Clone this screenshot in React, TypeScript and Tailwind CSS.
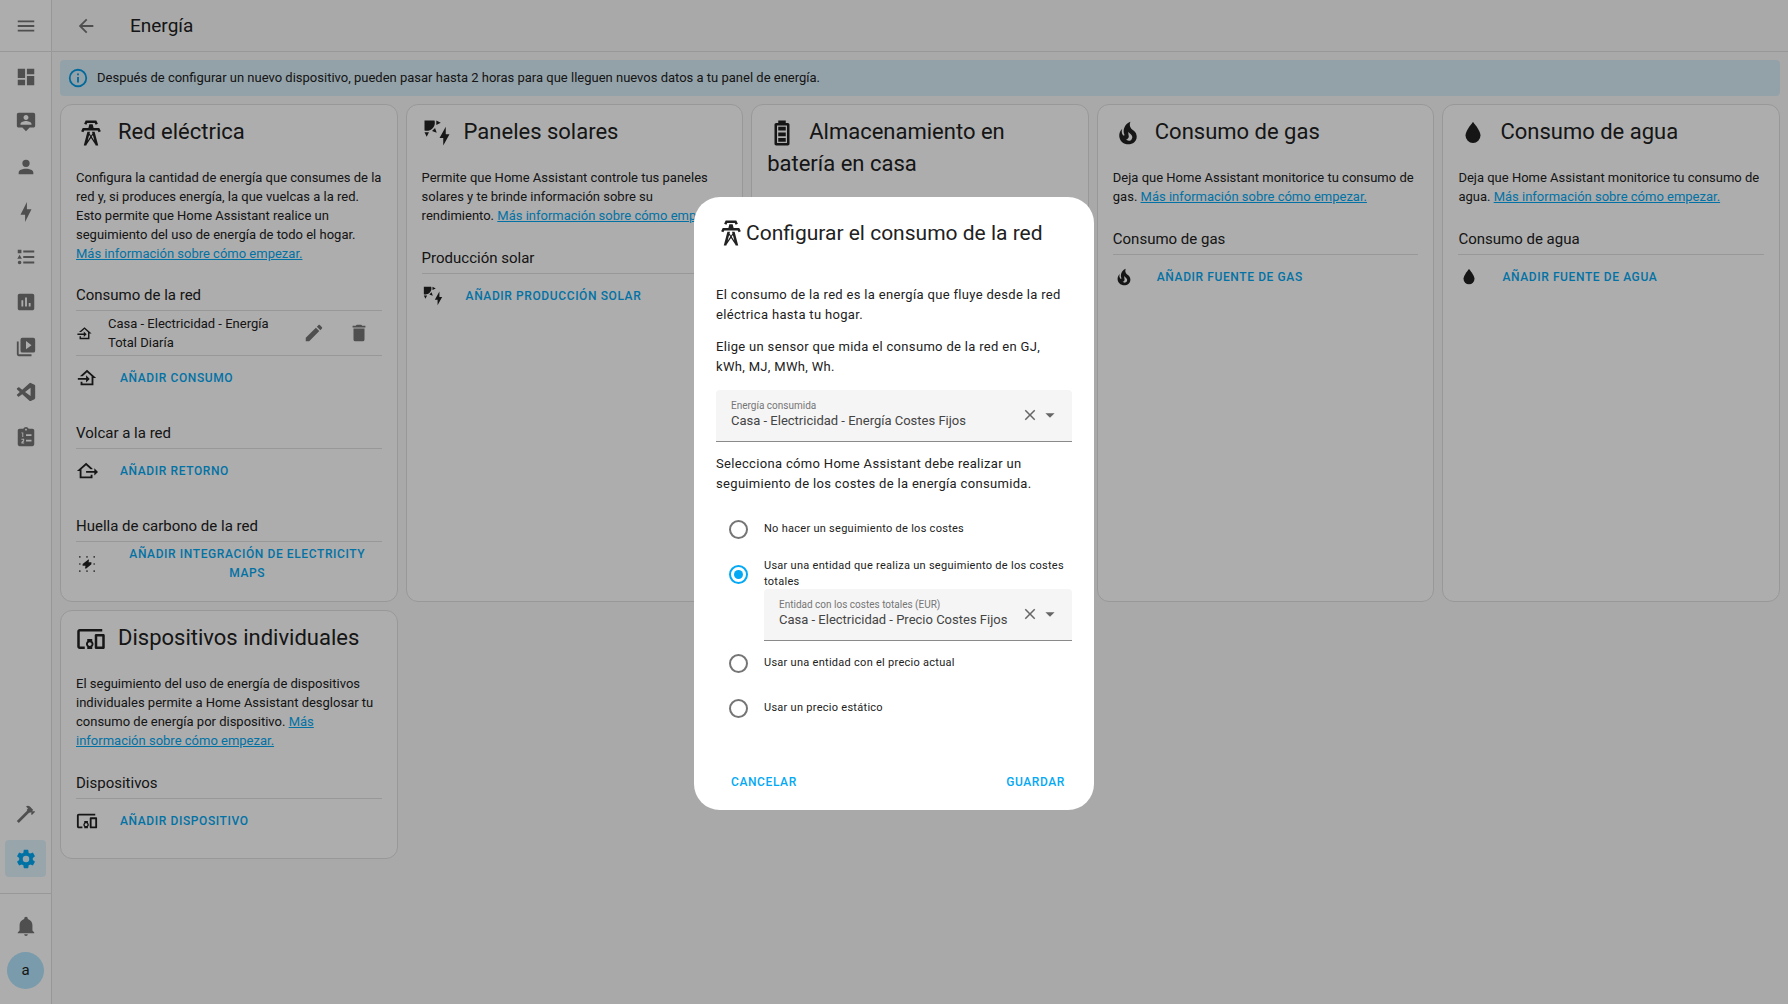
import { useState } from 'react';
import type { ReactNode } from 'react';

const icons = {
  menu: 'M3,6H21V8H3V6M3,11H21V13H3V11M3,16H21V18H3V16Z',
  arrowLeft: 'M20,11V13H8L13.5,18.5L12.08,19.92L4.16,12L12.08,4.08L13.5,5.5L8,11H20Z',
  dashboard: 'M13,3V9H21V3M13,21H21V11H13M3,21H11V15H3M3,13H11V3H3V13Z',
  tooltipAccount:
    'M20 2H4C2.9 2 2 2.9 2 4V16C2 17.11 2.9 18 4 18H8L12 22L16 18H20C21.11 18 22 17.11 22 16V4C22 2.9 21.11 2 20 2M12 4.3C13.5 4.3 14.7 5.5 14.7 7S13.5 9.7 12 9.7C10.5 9.7 9.3 8.5 9.3 7S10.5 4.3 12 4.3M18 15H6V14.1C6 12.1 10 11 12 11S18 12.1 18 14.1V15Z',
  account:
    'M12,4A4,4 0 0,1 16,8A4,4 0 0,1 12,12A4,4 0 0,1 8,8A4,4 0 0,1 12,4M12,14C16.42,14 20,15.79 20,18V20H4V18C4,15.79 7.58,14 12,14Z',
  bolt: 'M11 15H6L13 1V9H18L11 23V15Z',
  list: 'M5,9.5L7.5,14H2.5L5,9.5M3,4H7V8H3V4M5,20A2,2 0 0,0 7,18A2,2 0 0,0 5,16A2,2 0 0,0 3,18A2,2 0 0,0 5,20M9,5V7H21V5H9M9,19H21V17H9V19M9,13H21V11H9V13Z',
  chart:
    'M19 3H5C3.9 3 3 3.9 3 5V19C3 20.1 3.9 21 5 21H19C20.1 21 21 20.1 21 19V5C21 3.9 20.1 3 19 3M9 17H7V10H9V17M13 17H11V7H13V17M17 17H15V13H17V17Z',
  media:
    'M4,6H2V20A2,2 0 0,0 4,22H18V20H4V6M20,2H8A2,2 0 0,0 6,4V16A2,2 0 0,0 8,18H20A2,2 0 0,0 22,16V4A2,2 0 0,0 20,2M12,14.5V5.5L18,10L12,14.5Z',
  vscode:
    'M21.29 4.1L17.17 2.12A1.25 1.25 0 0 0 15.75 2.36L7.87 9.55L4.44 6.94A.83 .83 0 0 0 3.37 6.99L2.27 7.99A.83 .83 0 0 0 2.27 9.22L5.25 11.93L2.27 14.65A.83 .83 0 0 0 2.27 15.88L3.37 16.88A.83 .83 0 0 0 4.44 16.93L7.87 14.33L15.75 21.52A1.25 1.25 0 0 0 17.17 21.76L21.29 19.78A1.25 1.25 0 0 0 22 18.65V5.22A1.25 1.25 0 0 0 21.29 4.1M17 16.47L11 11.94L17 7.4Z',
  clipboard:
    'M19 3H14.82C14.4 1.84 13.3 1 12 1S9.6 1.84 9.18 3H5C3.9 3 3 3.9 3 5V20C3 21.1 3.9 22 5 22H19C20.1 22 21 21.1 21 20V5C21 3.9 20.1 3 19 3M12 3C12.55 3 13 3.45 13 4S12.55 5 12 5 11 4.55 11 4 11.45 3 12 3M7 7H9V12H8V8H7V7M7 14H10V16.5L8.2 18H10V19H7V17.5L9 15.5V15H7V14M12 9H18V11H12V9M12 15H18V17H12V15Z',
  hammer:
    'M2,19.63L13.43,8.2L12.72,7.5L14.14,6.07L12,3.89C13.2,2.7 15.09,2.7 16.27,3.89L19.87,7.5L18.45,8.91H21.29L22,9.62L18.45,13.21L17.74,12.5V9.62L16.27,11.04L15.56,10.33L4.13,21.76L2,19.63Z',
  cog: 'M12,15.5A3.5,3.5 0 0,1 8.5,12A3.5,3.5 0 0,1 12,8.5A3.5,3.5 0 0,1 15.5,12A3.5,3.5 0 0,1 12,15.5M19.43,12.97C19.47,12.65 19.5,12.33 19.5,12C19.5,11.67 19.47,11.34 19.43,11L21.54,9.37C21.73,9.22 21.78,8.95 21.66,8.73L19.66,5.27C19.54,5.05 19.27,4.96 19.05,5.05L16.56,6.05C16.04,5.66 15.5,5.32 14.87,5.07L14.5,2.42C14.46,2.18 14.25,2 14,2H10C9.75,2 9.54,2.18 9.5,2.42L9.13,5.07C8.5,5.32 7.96,5.66 7.44,6.05L4.95,5.05C4.73,4.96 4.46,5.05 4.34,5.27L2.34,8.73C2.21,8.95 2.27,9.22 2.46,9.37L4.57,11C4.53,11.34 4.5,11.67 4.5,12C4.5,12.33 4.53,12.65 4.57,12.97L2.46,14.63C2.27,14.78 2.21,15.05 2.34,15.27L4.34,18.73C4.46,18.95 4.73,19.03 4.95,18.95L7.44,17.94C7.96,18.34 8.5,18.68 9.13,18.93L9.5,21.58C9.54,21.82 9.75,22 10,22H14C14.25,22 14.46,21.82 14.5,21.58L14.87,18.93C15.5,18.67 16.04,18.34 16.56,17.94L19.05,18.95C19.27,19.03 19.54,18.95 19.66,18.73L21.66,15.27C21.78,15.05 21.73,14.78 21.54,14.63L19.43,12.97Z',
  bell: 'M21,19V20H3V19L5,17V11C5,7.9 7.03,5.17 10,4.29C10,4.19 10,4.1 10,4A2,2 0 0,1 12,2A2,2 0 0,1 14,4C14,4.1 14,4.19 14,4.29C16.97,5.17 19,7.9 19,11V17L21,19M14,21A2,2 0 0,1 12,23A2,2 0 0,1 10,21',
  info: 'M11,9H13V7H11M12,20C7.59,20 4,16.41 4,12C4,7.59 7.59,4 12,4C16.41,4 20,7.59 20,12C20,16.41 16.41,20 12,20M12,2A10,10 0 0,0 2,12A10,10 0 0,0 12,22A10,10 0 0,0 22,12A10,10 0 0,0 12,2M11,17H13V11H11V17Z',
  tower:
    'M8.28,5.45L6.5,4.55L7.76,2H16.23L17.5,4.55L15.72,5.44L15,4H9L8.28,5.45M18.62,8H14.09L13.3,5H10.7L9.91,8H5.38L4.1,10.55L5.89,11.44L6.62,10H17.38L18.1,11.45L19.89,10.56L18.62,8M17.77,22H15.7L15.46,21.1L12,15.9L8.53,21.1L8.3,22H6.23L9.12,11H11.19L10.83,12.35L12,14.1L13.16,12.35L12.81,11H14.88L17.77,22M11.4,15L10.5,13.65L9.32,18.13L11.4,15M14.68,18.12L13.5,13.64L12.6,15L14.68,18.12Z',
  solar:
    'M11.45,2V5.55L15,3.77L11.45,2M10.45,8L8,10.46L11.75,11.71L10.45,8M2,11.45L3.77,15L5.55,11.45H2M10,2H2V10C2.57,10.17 3.17,10.25 3.77,10.25C7.35,10.26 10.26,7.35 10.27,3.75C10.26,3.16 10.17,2.57 10,2M17,22V16H14L19,7V13H22L17,22Z',
  battery:
    'M16 20H8V6H16M16.67 4H15V2H9V4H7.33C6.6 4 6 4.6 6 5.33V20.67C6 21.4 6.6 22 7.33 22H16.67C17.41 22 18 21.41 18 20.67V5.33C18 4.6 17.4 4 16.67 4M15 16H9V19H15V16M15 7H9V10H15V7M15 11.5H9V14.5H15V11.5Z',
  fire: 'M17.66 11.2C17.43 10.9 17.15 10.64 16.89 10.38C16.22 9.78 15.46 9.35 14.82 8.72C13.33 7.26 13 4.85 13.95 3C13 3.23 12.17 3.75 11.46 4.32C8.87 6.4 7.85 10.07 9.07 13.22C9.11 13.32 9.15 13.42 9.15 13.55C9.15 13.77 9 13.97 8.8 14.05C8.57 14.15 8.33 14.09 8.14 13.93C8.08 13.88 8.04 13.83 8 13.76C6.87 12.33 6.69 10.28 7.45 8.64C5.78 10 4.87 12.3 5 14.47C5.06 14.97 5.12 15.47 5.29 15.97C5.43 16.57 5.7 17.17 6 17.7C7.08 19.43 8.95 20.67 10.96 20.92C13.1 21.19 15.39 20.8 17.03 19.32C18.86 17.66 19.5 15 18.56 12.72L18.43 12.46C18.22 12 17.66 11.2 17.66 11.2M14.5 17.5C14.22 17.74 13.76 18 13.4 18.1C12.28 18.5 11.16 17.94 10.5 17.28C11.69 17 12.4 16.12 12.61 15.23C12.78 14.43 12.46 13.77 12.33 13C12.21 12.26 12.23 11.63 12.5 10.94C12.69 11.32 12.89 11.7 13.13 12C13.9 13 15.11 13.44 15.37 14.8C15.41 14.94 15.43 15.08 15.43 15.23C15.46 16.05 15.1 16.95 14.5 17.5H14.5Z',
  water: 'M12,20A6,6 0 0,1 6,14C6,10 12,3.25 12,3.25C12,3.25 18,10 18,14A6,6 0 0,1 12,20Z',
  devices:
    'M3 6H21V4H3C1.9 4 1 4.9 1 6V18C1 19.1 1.9 20 3 20H7V18H3V6M13 12H9V13.78C8.39 14.33 8 15.11 8 16C8 16.89 8.39 17.67 9 18.22V20H13V18.22C13.61 17.67 14 16.88 14 16S13.61 14.33 13 13.78V12M11 17.5C10.17 17.5 9.5 16.83 9.5 16S10.17 14.5 11 14.5 12.5 15.17 12.5 16 11.83 17.5 11 17.5M22 8H16C15.5 8 15 8.5 15 9V19C15 19.5 15.5 20 16 20H22C22.5 20 23 19.5 23 19V9C23 8.5 22.5 8 22 8M21 18H17V10H21V18Z',
  homeImport: 'M15 13L11 17V14H2V12H11V9L15 13M5 20V16H7V18H17V10.19L12 5.69L7.21 10H4.22L12 3L22 12H19V20H5Z',
  homeExport: 'M24 13L20 17V14H11V12H20V9L24 13M4 20V12H1L11 3L18 9.3V10H15.79L11 5.69L6 10.19V18H16V16H18V20H4Z',
  carbon:
    'M13.5 7.2L7.2 12V13.8H10.4L9.8 16.8L11.2 17L16.8 12.2V10.2H13.7L14.2 7.4L13.5 7.2M3.6 3.4H4.8V5.2H3.6V3.4M11.4 3.4H12.6V5.2H11.4V3.4M19.2 3.4H20.4V5.2H19.2V3.4M3.6 11.1H4.8V12.9H3.6V11.1M19.2 11.1H20.4V12.9H19.2V11.1M3.6 18.8H4.8V20.6H3.6V18.8M11.4 18.8H12.6V20.6H11.4V18.8M19.2 18.8H20.4V20.6H19.2V18.8Z',
  pencil:
    'M20.71,7.04C21.1,6.65 21.1,6 20.71,5.63L18.37,3.29C18,2.9 17.35,2.9 16.96,3.29L15.12,5.12L18.87,8.87M3,17.25V21H6.75L17.81,9.93L14.06,6.18L3,17.25Z',
  trash: 'M19,4H15.5L14.5,3H9.5L8.5,4H5V6H19M6,19A2,2 0 0,0 8,21H16A2,2 0 0,0 18,19V7H6V19Z',
  close: 'M19,6.41L17.59,5L12,10.59L6.41,5L5,6.41L10.59,12L5,17.59L6.41,19L12,13.41L17.59,19L19,17.59L13.41,12L19,6.41Z',
  menuDown: 'M7,10L12,15L17,10H7Z',
};

type IconName = keyof typeof icons;

function Icon({ name, className = 'size-[22px]' }: { name: IconName; className?: string }) {
  return (
    <svg viewBox="0 0 24 24" fill="currentColor" fillRule="evenodd" aria-hidden="true" className={`shrink-0 ${className}`}>
      <path d={icons[name]} />
    </svg>
  );
}

const sidebarTop: { icon: IconName; label: string }[] = [
  { icon: 'dashboard', label: 'Resumen' },
  { icon: 'tooltipAccount', label: 'Mapa' },
  { icon: 'account', label: 'Personas' },
  { icon: 'bolt', label: 'Energía' },
  { icon: 'list', label: 'Registro' },
  { icon: 'chart', label: 'Historial' },
  { icon: 'media', label: 'Medios' },
  { icon: 'vscode', label: 'Studio Code Server' },
  { icon: 'clipboard', label: 'Lista de tareas' },
];

function SidebarItem({ icon, label, active }: { icon: IconName; label: string; active?: boolean }) {
  return (
    <a
      href="#"
      aria-label={label}
      className={`flex h-[37px] w-[41px] items-center justify-center rounded ${
        active ? 'bg-[#e1f5fe] text-[#03a9f4]' : 'text-[#757575]'
      }`}
    >
      <Icon name={icon} />
    </a>
  );
}

function Sidebar() {
  return (
    <nav className="flex w-[52px] shrink-0 flex-col border-r border-[#e0e0e0] bg-white">
      <div className="flex h-[52px] shrink-0 items-center justify-center border-b border-[#e0e0e0]">
        <button aria-label="Menú" className="text-[#757575]">
          <Icon name="menu" />
        </button>
      </div>
      <div className="flex flex-1 flex-col items-center gap-2 pt-[6px]">
        {sidebarTop.map((item) => (
          <SidebarItem key={item.icon} {...item} />
        ))}
      </div>
      <div className="flex flex-col items-center gap-2 pb-4">
        <SidebarItem icon="hammer" label="Herramientas" />
        <SidebarItem icon="cog" label="Ajustes" active />
      </div>
      <div className="flex flex-col items-center gap-2 border-t border-[#e0e0e0] pt-[13px] pb-[15px]">
        <SidebarItem icon="bell" label="Notificaciones" />
        <button className="flex size-[37px] items-center justify-center rounded-full bg-[#b3e5fc] text-[15px] text-[#212121]">
          a
        </button>
      </div>
    </nav>
  );
}

function Card({ icon, title, children }: { icon: IconName; title: string; children?: ReactNode }) {
  return (
    <section className="rounded-xl border border-[#e0e0e0] bg-white px-[15px] pb-[15px] text-[13px] leading-[19px]">
      <h1 className="pt-[11px] text-[22px] leading-8">
        <Icon name={icon} className="mr-3 inline-block size-[30px] align-middle" />
        {title}
      </h1>
      {children}
    </section>
  );
}

function MoreLink() {
  return (
    <a href="#" className="text-[#03a9f4] underline">
      Más información sobre cómo empezar.
    </a>
  );
}

function Section({ title, children }: { title: string; children: ReactNode }) {
  return (
    <div>
      <h3 className="border-b border-[#e0e0e0] pb-[5px] text-[15px] leading-[19px]">{title}</h3>
      {children}
    </div>
  );
}

function AddRow({ icon, children }: { icon: IconName; children: ReactNode }) {
  return (
    <div className="flex h-11 items-center">
      <Icon name={icon} />
      <button className="ml-[15px] px-[7px] text-xs leading-[19px] font-medium tracking-wider text-[#03a9f4] uppercase">
        {children}
      </button>
    </div>
  );
}

function ComboBox({ id, label, value }: { id: string; label: string; value: string }) {
  return (
    <div className="flex h-[52px] items-center rounded-t border-b border-[#8a8a8a] bg-[#f5f5f5] pr-[11px] pl-[15px] tracking-normal">
      <div className="flex min-w-0 flex-1 flex-col">
        <label htmlFor={id} className="text-[10px] leading-3 text-[#757575]">
          {label}
        </label>
        <input
          id={id}
          defaultValue={value}
          className="w-full bg-transparent text-[13px] leading-[18px] text-[#444] outline-none"
        />
      </div>
      <button aria-label="Borrar" className="text-[#666]">
        <Icon name="close" className="size-[18px]" />
      </button>
      <button aria-label="Abrir" className="text-[#666]">
        <Icon name="menuDown" />
      </button>
    </div>
  );
}

function RadioOption({
  value,
  selected,
  onSelect,
  children,
}: {
  value: string;
  selected: string;
  onSelect: (value: string) => void;
  children: ReactNode;
}) {
  return (
    <label className="flex h-[45px] items-center gap-4 pl-[13px] text-[11px] leading-4 tracking-wide">
      <input
        type="radio"
        name="costs"
        checked={selected === value}
        onChange={() => onSelect(value)}
        className="size-[19px] shrink-0 appearance-none rounded-full border-2 border-[#757575] bg-clip-content p-[3px] checked:border-[#03a9f4] checked:bg-[#03a9f4]"
      />
      <span>{children}</span>
    </label>
  );
}

function GridDialog() {
  const [costs, setCosts] = useState('entity');

  return (
    <div className="fixed inset-0 flex items-center justify-center bg-black/32">
      <div
        role="dialog"
        aria-labelledby="dialog-title"
        className="mt-[2px] w-[400px] rounded-[26px] bg-white px-[22px] pb-[9px] text-[13px] leading-5 tracking-wide"
      >
        <h2 id="dialog-title" className="flex items-center pt-[21px] text-[21px] leading-[30px] tracking-normal">
          <Icon name="tower" className="size-[30px]" />
          Configurar el consumo de la red
        </h2>
        <p className="mt-[37px]">El consumo de la red es la energía que fluye desde la red eléctrica hasta tu hogar.</p>
        <p className="mt-3 mb-[13px]">Elige un sensor que mida el consumo de la red en GJ, kWh, MJ, MWh, Wh.</p>
        <ComboBox id="stat-energy" label="Energía consumida" value="Casa - Electricidad - Energía Costes Fijos" />
        <p className="mt-3 mb-[13px]">
          Selecciona cómo Home Assistant debe realizar un seguimiento de los costes de la energía consumida.
        </p>
        <RadioOption value="none" selected={costs} onSelect={setCosts}>
          No hacer un seguimiento de los costes
        </RadioOption>
        <RadioOption value="entity" selected={costs} onSelect={setCosts}>
          Usar una entidad que realiza un seguimiento de los costes totales
        </RadioOption>
        <div className="-mt-2 ml-12">
          <ComboBox id="stat-cost" label="Entidad con los costes totales (EUR)" value="Casa - Electricidad - Precio Costes Fijos" />
        </div>
        <RadioOption value="price" selected={costs} onSelect={setCosts}>
          Usar una entidad con el precio actual
        </RadioOption>
        <RadioOption value="static" selected={costs} onSelect={setCosts}>
          Usar un precio estático
        </RadioOption>
        <div className="mt-[33px] flex h-[37px] items-center justify-between pr-[7px] pl-[15px] text-xs font-medium text-[#03a9f4]">
          <button className="tracking-wider uppercase">Cancelar</button>
          <button className="tracking-wider uppercase">Guardar</button>
        </div>
      </div>
    </div>
  );
}

export default function App() {
  return (
    <div className="flex min-h-screen bg-[#fafafa] font-[Roboto,sans-serif] text-[#212121]">
      <Sidebar />
      <div className="flex min-w-0 flex-1 flex-col">
        <header className="flex h-[52px] items-center border-b border-[#e0e0e0] pl-[23px]">
          <button aria-label="Atrás" className="text-[#757575]">
            <Icon name="arrowLeft" />
          </button>
          <h1 className="ml-[33px] pt-px text-[19px]">Energía</h1>
        </header>
        <main className="flex flex-col gap-2 p-2">
          <div role="alert" className="flex h-9 items-center gap-2 rounded bg-[#d9eff9] px-[7px] text-[13px]">
            <Icon name="info" className="size-[22px] text-[#039be5]" />
            Después de configurar un nuevo dispositivo, pueden pasar hasta 2 horas para que lleguen nuevos datos a tu
            panel de energía.
          </div>
          <div className="grid grid-cols-5 gap-2">
            <Card icon="tower" title="Red eléctrica">
              <p className="mt-5 mb-[23px]">
                Configura la cantidad de energía que consumes de la red y, si produces energía, la que vuelcas a la
                red. Esto permite que Home Assistant realice un seguimiento del uso de energía de todo el hogar.{' '}
                <MoreLink />
              </p>
              <div className="flex flex-col gap-6">
                <Section title="Consumo de la red">
                  <div className="flex h-[45px] items-center border-b border-[#e0e0e0]">
                    <Icon name="homeImport" className="size-[17px]" />
                    <span className="ml-[15px] flex-1">Casa - Electricidad - Energía Total Diaría</span>
                    <button aria-label="Editar" className="flex size-[45px] items-center justify-center text-[#757575]">
                      <Icon name="pencil" />
                    </button>
                    <button aria-label="Eliminar" className="flex size-[45px] items-center justify-center text-[#757575]">
                      <Icon name="trash" />
                    </button>
                  </div>
                  <AddRow icon="homeImport">Añadir consumo</AddRow>
                </Section>
                <Section title="Volcar a la red">
                  <AddRow icon="homeExport">Añadir retorno</AddRow>
                </Section>
                <Section title="Huella de carbono de la red">
                  <AddRow icon="carbon">Añadir integración de Electricity Maps</AddRow>
                </Section>
              </div>
            </Card>
            <Card icon="solar" title="Paneles solares">
              <p className="mt-5 mb-6">
                Permite que Home Assistant controle tus paneles solares y te brinde información sobre su rendimiento.{' '}
                <MoreLink />
              </p>
              <Section title="Producción solar">
                <AddRow icon="solar">Añadir producción solar</AddRow>
              </Section>
            </Card>
            <Card icon="battery" title="Almacenamiento en batería en casa" />
            <Card icon="fire" title="Consumo de gas">
              <p className="mt-5 mb-6">
                Deja que Home Assistant monitorice tu consumo de gas. <MoreLink />
              </p>
              <Section title="Consumo de gas">
                <AddRow icon="fire">Añadir fuente de gas</AddRow>
              </Section>
            </Card>
            <Card icon="water" title="Consumo de agua">
              <p className="mt-5 mb-6">
                Deja que Home Assistant monitorice tu consumo de agua. <MoreLink />
              </p>
              <Section title="Consumo de agua">
                <AddRow icon="water">Añadir fuente de agua</AddRow>
              </Section>
            </Card>
            <Card icon="devices" title="Dispositivos individuales">
              <p className="mt-5 mb-6">
                El seguimiento del uso de energía de dispositivos individuales permite a Home Assistant desglosar tu
                consumo de energía por dispositivo. <MoreLink />
              </p>
              <Section title="Dispositivos">
                <AddRow icon="devices">Añadir dispositivo</AddRow>
              </Section>
            </Card>
          </div>
        </main>
      </div>
      <GridDialog />
    </div>
  );
}
